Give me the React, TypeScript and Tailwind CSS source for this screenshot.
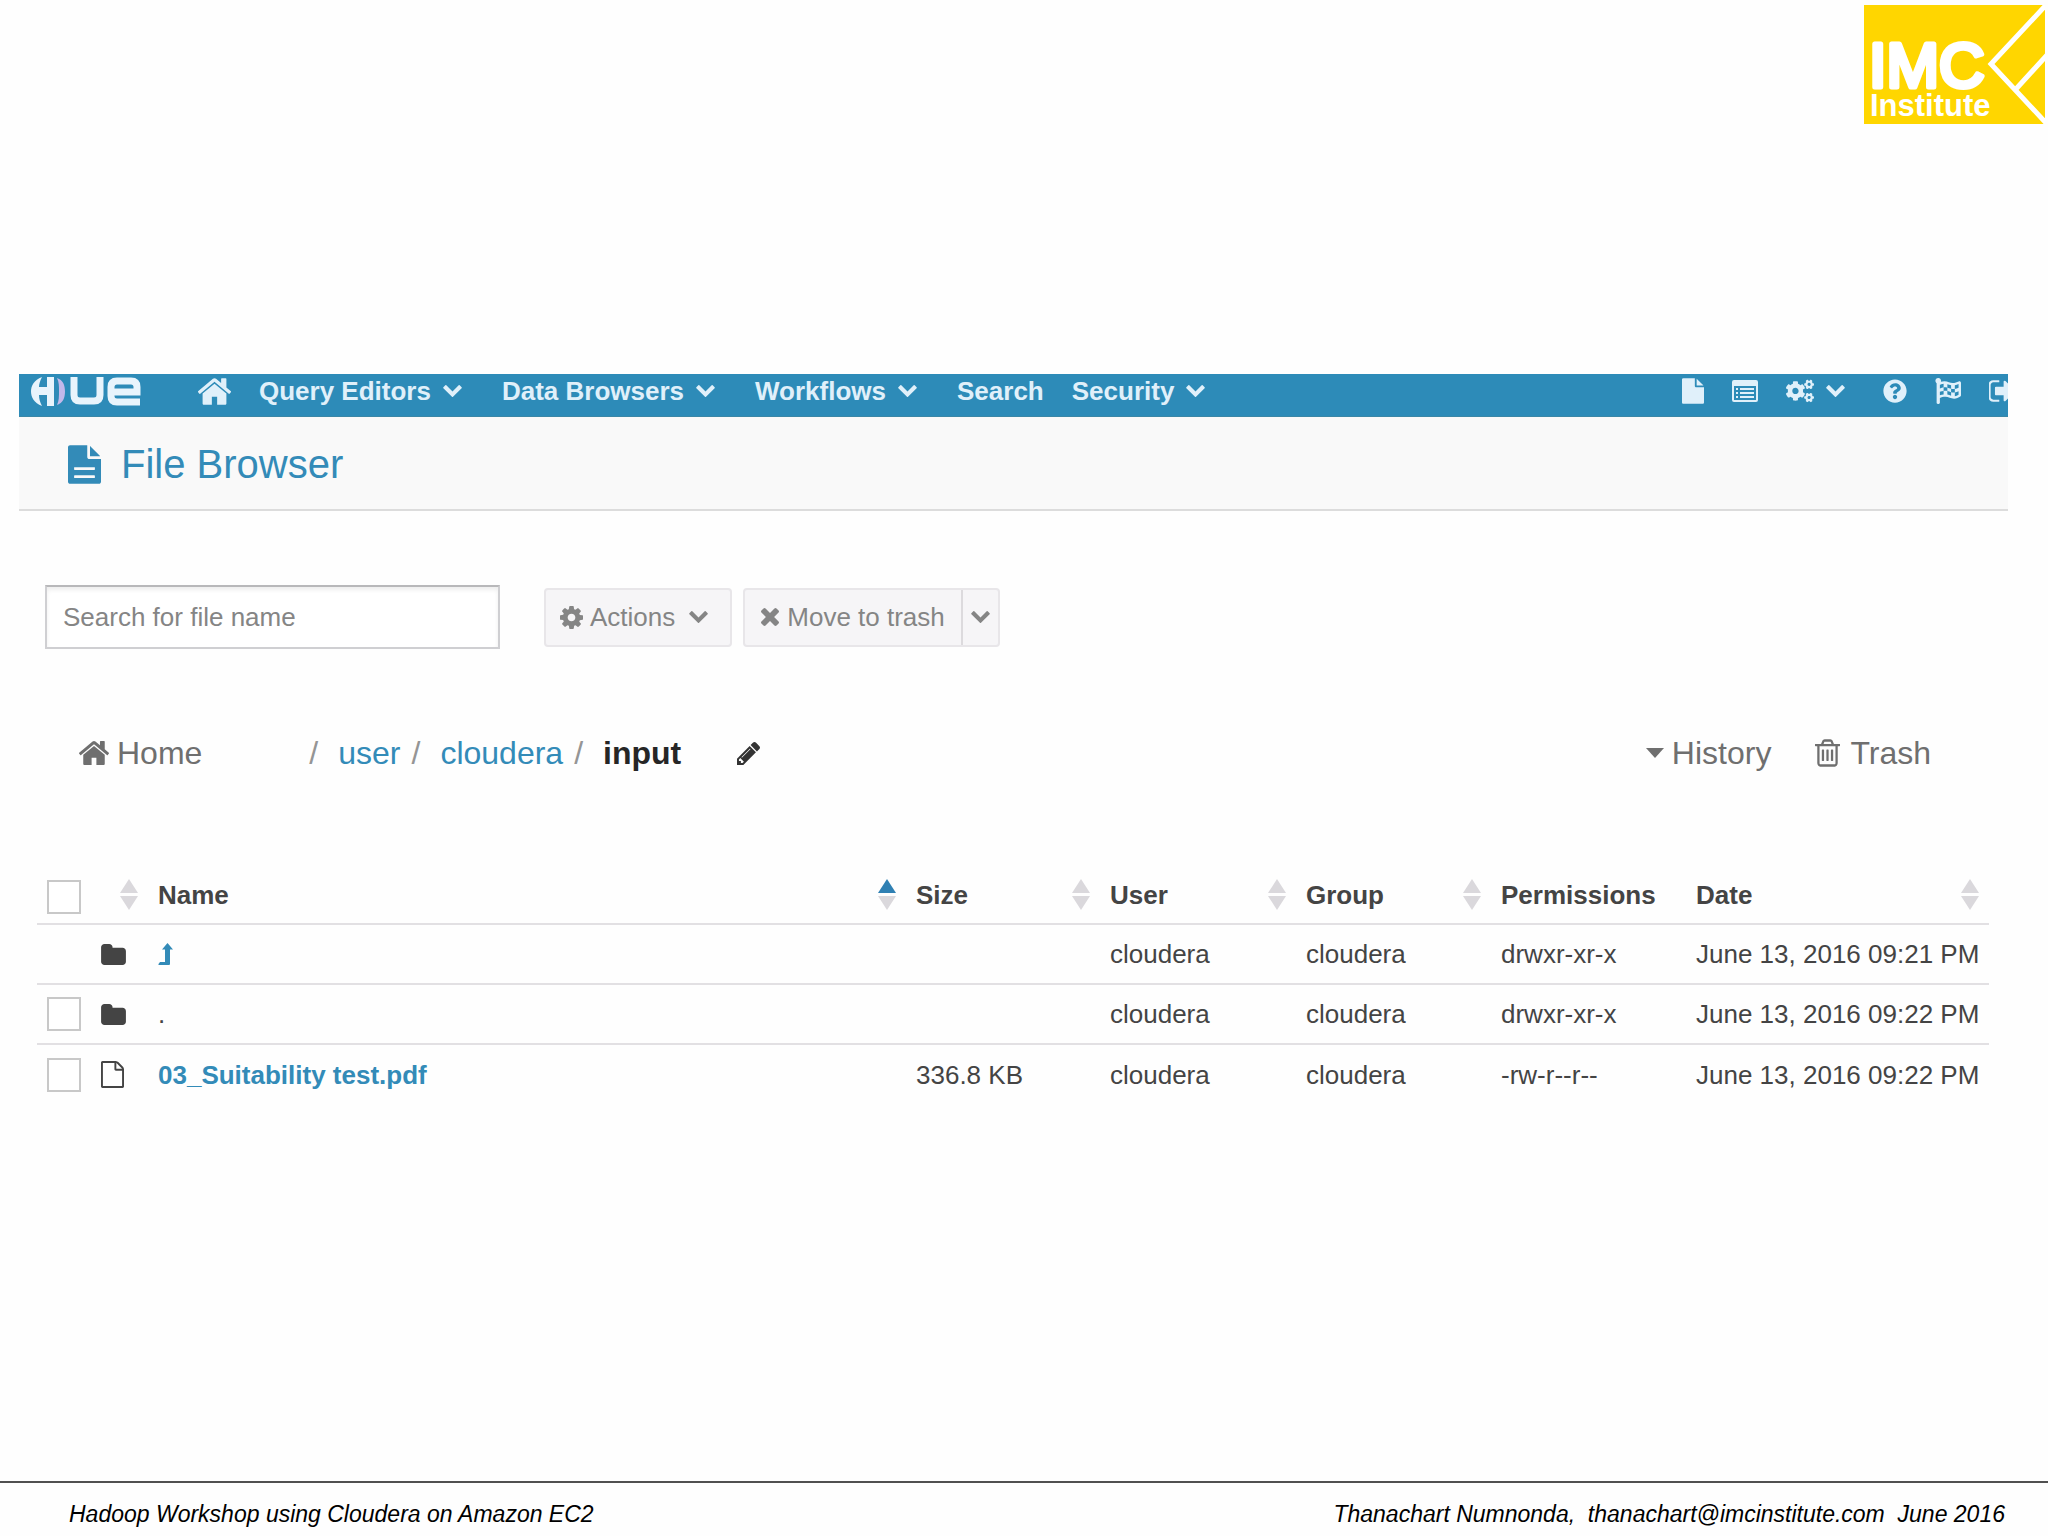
import { FaCogs, FaFlagCheckered, FaQuestionCircle } from "react-icons/fa";

const icons = {
  home: {
    viewBox: "97 250 1598 1286",
    d: "M1472 992v480q0 26-19 45t-45 19h-384v-384h-256v384h-384q-26 0-45-19t-19-45v-480q0-1 .5-3t.5-3l575-474 575 474q1 2 1 6zm223-69l-62 74q-8 9-21 11h-3q-13 0-21-7l-692-577-692 577q-12 8-24 7-13-2-21-11l-62-74q-8-10-7-23.5t11-21.5l719-599q32-26 76-26t76 26l244 204v-195q0-14 9-23t23-9h192q14 0 23 9t9 23v408l219 182q10 8 11 21.5t-7 23.5z",
  },
  chevron: {
    viewBox: "90 533 1612 1035",
    d: "M1683 808l-742 741q-19 19-45 19t-45-19l-742-741q-19-19-19-45.5t19-45.5l166-165q19-19 45-19t45 19l531 531 531-531q19-19 45-19t45 19l166 165q19 19 19 45.5t-19 45.5z",
  },
  file: {
    viewBox: "128 0 1536 1792",
    d: "M1152 512v-472q22 14 36 28l408 408q14 14 28 36h-472zm-128 32q0 40 28 68t68 28h544v1056q0 40-28 68t-68 28h-1344q-40 0-68-28t-28-68v-1600q0-40 28-68t68-28h800v544z",
  },
  fileText: {
    viewBox: "128 0 1536 1792",
    d: "M1596 476q14 14 28 36h-472v-472q22 14 36 28zm-476 164h544v1056q0 40-28 68t-68 28h-1344q-40 0-68-28t-28-68v-1600q0-40 28-68t68-28h800v544q0 40 28 68t68 28zm260 856v-64q0-14-9-23t-23-9h-904q-14 0-23 9t-9 23v64q0 14 9 23t23 9h904q14 0 23-9t9-23zm0-380v-64q0-14-9-23t-23-9h-904q-14 0-23 9t-9 23v64q0 14 9 23t23 9h904q14 0 23-9t9-23z",
  },
  fileOutline: {
    viewBox: "128 0 1536 1792",
    d: "M1596 380q28 28 48 76t20 88v1152q0 40-28 68t-68 28h-1344q-40 0-68-28t-28-68v-1600q0-40 28-68t68-28h896q40 0 88 20t76 48zm-444-244v376h376q-10-29-22-41l-313-313q-12-12-41-22zm384 1528v-1024h-416q-40 0-68-28t-28-68v-416h-768v1536h1280z",
  },
  listAlt: {
    viewBox: "0 0 26 22",
    d: "M2 0h22a2 2 0 0 1 2 2v18a2 2 0 0 1-2 2H2a2 2 0 0 1-2-2V2a2 2 0 0 1 2-2zM2 6v14h22V6zM4 8h2v2H4zM8 8h14v2H8zM4 12h2v2H4zM8 12h14v2H8zM4 16h2v2H4zM8 16h14v2H8z",
  },
  folder: {
    viewBox: "64 128 1664 1408",
    d: "M1728 608v704q0 92-66 158t-158 66h-1216q-92 0-158-66t-66-158v-960q0-92 66-158t158-66h320q92 0 158 66t66 158v32h672q92 0 158 66t66 158z",
  },
  levelUp: {
    viewBox: "0 0 15 22",
    d: "M9.500 0L15 6.500h-3V21q0 1-1 1H1q-1 0-.5-1L2 19h5V6.500H4z",
  },
  pencil: {
    viewBox: "128 149 1515 1515",
    d: "M491 1536l91-91-235-235-91 91v107h128v128h107zm523-928q0-22-22-22-10 0-17 7l-542 542q-7 7-7 17 0 22 22 22 10 0 17-7l542-542q7-7 7-17zm-54-192l416 416-832 832h-416v-416zm683 96q0 53-37 90l-166 166-416-416 166-165q36-38 90-38 53 0 91 38l235 234q37 39 37 91z",
  },
  times: {
    viewBox: "302 366 1188 1188",
    d: "M1490 1322q0 40-28 68l-136 136q-28 28-68 28t-68-28l-294-294-294 294q-28 28-68 28t-68-28l-136-136q-28-28-28-68t28-68l294-294-294-294q-28-28-28-68t28-68l136-136q28-28 68-28t68 28l294 294 294-294q28-28 68-28t68 28l136 136q28 28 28 68t-28 68l-294 294 294 294q28 28 28 68z",
  },
  cog: {
    viewBox: "128 128 1536 1536",
    d: "M1152 896q0-106-75-181t-181-75-181 75-75 181 75 181 181 75 181-75 75-181zm512-109v222q0 12-8 23t-20 13l-185 28q-19 54-39 91 35 50 107 138 10 12 10 25t-9 23q-27 37-99 108t-94 71q-12 0-26-9l-138-108q-44 23-91 38-16 136-29 186-7 28-36 28h-222q-14 0-24.5-8.5t-11.5-21.5l-28-184q-49-16-90-37l-141 107q-10 9-25 9-14 0-25-11-126-114-165-168-7-10-7-23 0-12 8-23 15-21 51-66.5t54-70.5q-27-50-41-99l-183-27q-13-2-21-12.5t-8-23.5v-222q0-12 8-23t19-13l186-28q14-46 39-92-40-57-107-138-10-12-10-24 0-10 9-23 26-36 98.5-107.5t94.5-71.5q13 0 26 10l138 107q44-23 91-38 16-136 29-186 7-28 36-28h222q14 0 24.5 8.5t11.5 21.5l28 184q49 16 90 37l142-107q9-9 24-9 13 0 25 10 129 119 165 170 7 8 7 22 0 12-8 23-15 21-51 66.5t-54 70.5q26 50 41 98l183 28q13 2 21 12.5t8 23.5z",
  },
  trash: {
    viewBox: "192 128 1408 1536",
    d: "M704 736v576q0 14-9 23t-23 9h-64q-14 0-23-9t-9-23v-576q0-14 9-23t23-9h64q14 0 23 9t9 23zm256 0v576q0 14-9 23t-23 9h-64q-14 0-23-9t-9-23v-576q0-14 9-23t23-9h64q14 0 23 9t9 23zm256 0v576q0 14-9 23t-23 9h-64q-14 0-23-9t-9-23v-576q0-14 9-23t23-9h64q14 0 23 9t9 23zm128 724v-948h-896v948q0 22 7 40.5t14.5 27 10.5 8.5h832q3 0 10.5-8.5t14.5-27 7-40.5zm-672-1076h448l-48-117q-7-9-17-11h-317q-10 2-17 11zm928 32v64q0 14-9 23t-23 9h-96v948q0 83-47 143.5t-113 60.5h-832q-66 0-113-58.5t-47-141.5v-952h-96q-14 0-23-9t-9-23v-64q0-14 9-23t23-9h309l70-167q15-37 54-63t79-26h320q40 0 79 26t54 63l70 167h309q14 0 23 9t9 23z",
  },
  caret: {
    viewBox: "0 0 18 10",
    d: "M0 0h18l-9 10z",
  },
  signOut: {
    viewBox: "96 256 1536 1280",
    d: "M704 1440q0 4 1 20t.5 26.5-3 23.5-10 19.5-20.5 6.5h-320q-119 0-203.5-84.5t-84.5-203.5v-704q0-119 84.5-203.5t203.5-84.5h320q13 0 22.5 9.5t9.5 22.5q0 4 1 20t.5 26.5-3 23.5-10 19.5-20.5 6.5h-320q-66 0-113 47t-47 113v704q0 66 47 113t113 47h312l11.5 1 11.5 3 8 5.5 7 9 2 13.5zm928-544q0 26-19 45l-544 544q-19 19-45 19t-45-19-19-45v-288h-448q-26 0-45-19t-19-45v-384q0-26 19-45t45-19h448v-288q0-26 19-45t45-19 45 19l544 544q19 19 19 45z",
  },
};

type IconProps = {
  name: keyof typeof icons;
  className: string;
};

function Icon({ name, className }: IconProps) {
  return (
    <svg
      aria-hidden="true"
      className={`shrink-0 ${className}`}
      fill="currentColor"
      fillRule={name === "listAlt" ? "evenodd" : "nonzero"}
      viewBox={icons[name].viewBox}
    >
      <path d={icons[name].d} />
    </svg>
  );
}

function ImcLogo() {
  return (
    <svg
      aria-label="IMC Institute"
      className="h-[119px] w-[181px]"
      role="img"
      viewBox="0 0 181 119"
    >
      <rect fill="#ffd600" height="119" width="181" />
      <g
        fill="#fff"
        fontFamily="'Liberation Sans', Arial, sans-serif"
        stroke="#fff"
        strokeLinejoin="round"
      >
        <text fontSize="63" strokeWidth="5" x="5" y="82">
          IMC
        </text>
        <text fontSize="31" fontWeight="700" strokeWidth="0" x="6" y="111">
          Institute
        </text>
      </g>
      <path
        d="M183-1L127 59l56 60M152 84l31-34"
        fill="none"
        stroke="#fff"
        strokeWidth="5"
      />
    </svg>
  );
}

function HueLogo() {
  return (
    <svg
      aria-label="Hue"
      className="h-[30px] w-[110px]"
      fill="none"
      role="img"
      viewBox="0 0 110 30"
    >
      <path
        d="M11 1C3 4 0 10 0 15.500S3 27 11 30C9 26 8 23 8 19h8v11h7V1h-7v10H8C8 8 9 5 11 1z"
        fill="#e8f4fc"
      />
      <path
        d="M26 2c2 4 2 8 2 13s0 10-2 14c6-2 8-7 8-13.500S32 4 26 2z"
        fill="#c3b8ea"
      />
      <g stroke="#e8f4fc" strokeWidth="7">
        <path d="M43 1v18q0 6 6 6h14q6 0 6-6V1" />
        <path d="M109 26H86q-6 0-6-6v-9q0-6 6-6h14q6 0 6 6v5H80" />
      </g>
    </svg>
  );
}

const menus = ["Query Editors", "Data Browsers", "Workflows"];

function NavBar() {
  return (
    <nav className="flex h-[43px] items-center overflow-hidden border-b border-[#3b87a6] bg-[#2d8bb8] pb-2 pl-3 text-[26px] font-bold leading-8 text-[#e0f0fa]">
      <a className="shrink-0" href="#hue">
        <HueLogo />
      </a>
      <a aria-label="Home" className="ml-[57px] shrink-0" href="#home">
        <Icon className="h-[27px] w-[33px]" name="home" />
      </a>
      <div className="ml-7 flex shrink-0 items-center gap-10">
        {menus.map((menu) => (
          <button className="flex items-center gap-3" key={menu} type="button">
            {menu}
            <Icon className="h-3 w-[19px]" name="chevron" />
          </button>
        ))}
        <div className="flex items-center gap-7">
          <a href="#search">Search</a>
          <button className="flex items-center gap-3" type="button">
            Security
            <Icon className="h-3 w-[19px]" name="chevron" />
          </button>
        </div>
      </div>
      <div className="-mr-[7px] ml-auto flex shrink-0 items-center gap-7">
        <a aria-label="File browser" href="#files">
          <Icon className="h-[26px] w-[22px]" name="file" />
        </a>
        <a aria-label="Job browser" href="#jobs">
          <Icon className="h-[22px] w-[26px]" name="listAlt" />
        </a>
        <button
          aria-label="Administration"
          className="mr-2.5 flex items-center gap-3"
          type="button"
        >
          <FaCogs className="size-7" />
          <Icon className="h-3 w-[19px]" name="chevron" />
        </button>
        <a aria-label="Help" href="#help">
          <FaQuestionCircle className="size-6" />
        </a>
        <a aria-label="Tour" href="#tour">
          <FaFlagCheckered className="size-[26px]" />
        </a>
        <a aria-label="Sign out" href="#logout">
          <Icon className="h-[22px] w-[26px]" name="signOut" />
        </a>
      </div>
    </nav>
  );
}

function Toolbar() {
  return (
    <div className="mt-[74px] flex items-center pl-[26px] text-[26px] leading-8 text-[#858585]">
      <input
        aria-label="Search for file name"
        className="h-16 w-[455px] border-2 border-[#cfcfd2] border-t-[#b8b8ba] bg-white px-4 shadow-[inset_0_3px_4px_rgba(0,0,0,0.07)] outline-none placeholder:text-[#858585]"
        placeholder="Search for file name"
        type="text"
      />
      <button
        className="ml-11 flex h-[59px] items-center rounded-sm border-2 border-[#e8e6e9] bg-[#f6f5f7] pl-3.5 pr-[22px]"
        type="button"
      >
        <Icon className="mr-[7px] size-[23px]" name="cog" />
        Actions
        <Icon className="ml-3.5 h-3 w-[19px]" name="chevron" />
      </button>
      <div className="ml-[11px] flex h-[59px] rounded-sm border-2 border-[#e8e6e9] bg-[#f6f5f7]">
        <button className="flex items-center pl-4 pr-4" type="button">
          <Icon className="mr-2 size-[18px]" name="times" />
          Move to trash
        </button>
        <button
          aria-label="More delete options"
          className="flex items-center border-l-2 border-[#dcdadd] px-2"
          type="button"
        >
          <Icon className="h-3 w-[19px]" name="chevron" />
        </button>
      </div>
    </div>
  );
}

const crumbs = ["user", "cloudera"];

function Breadcrumbs() {
  return (
    <div className="mt-[84px] flex h-10 items-center justify-between pl-[60px] pr-[77px] text-[32px] leading-10 text-[#6f6f6f]">
      <div className="flex items-center">
        <a className="mr-[107px] flex items-center gap-2" href="#home">
          <Icon className="h-6 w-[30px]" name="home" />
          Home
        </a>
        <ol className="flex items-center gap-[11px]">
          {crumbs.map((crumb) => (
            <li className="flex gap-5" key={crumb}>
              <span className="text-[#959595]">/</span>
              <a className="text-[#338bb8]" href={`#${crumb}`}>
                {crumb}
              </a>
            </li>
          ))}
          <li className="flex gap-5">
            <span className="text-[#959595]">/</span>
            <span className="font-bold text-[#262626]">input</span>
          </li>
        </ol>
        <button aria-label="Edit path" className="ml-14 text-[#333]" type="button">
          <Icon className="size-[23px]" name="pencil" />
        </button>
      </div>
      <div className="flex items-center gap-11">
        <button className="flex items-center gap-2" type="button">
          <Icon className="h-2.5 w-[18px]" name="caret" />
          History
        </button>
        <a className="flex items-center gap-2.5" href="#trash">
          <Icon className="h-7 w-[25px]" name="trash" />
          Trash
        </a>
      </div>
    </div>
  );
}

function SortArrows({ active = false }: { active?: boolean }) {
  return (
    <svg aria-hidden="true" className="h-[31px] w-[18px] shrink-0" viewBox="0 0 18 31">
      <path d="M9 0l9 14H0z" fill={active ? "#2f80b3" : "#dad8dc"} />
      <path d="M9 31l9-14H0z" fill="#dad8dc" />
    </svg>
  );
}

const columns = [
  { label: "Name", width: "", sortable: true, active: true },
  { label: "Size", width: "w-[194px]", sortable: true },
  { label: "User", width: "w-[196px]", sortable: true },
  { label: "Group", width: "w-[195px]", sortable: true },
  { label: "Permissions", width: "w-[195px]", sortable: false },
  { label: "Date", width: "w-[303px]", sortable: true },
];

const files = [
  {
    name: "up",
    icon: "folder" as const,
    size: "",
    permissions: "drwxr-xr-x",
    date: "June 13, 2016 09:21 PM",
  },
  {
    name: ".",
    icon: "folder" as const,
    size: "",
    permissions: "drwxr-xr-x",
    date: "June 13, 2016 09:22 PM",
  },
  {
    name: "03_Suitability test.pdf",
    icon: "fileOutline" as const,
    size: "336.8 KB",
    permissions: "-rw-r--r--",
    date: "June 13, 2016 09:22 PM",
  },
];

function Checkbox({ label }: { label: string }) {
  return (
    <input
      aria-label={label}
      className="block size-[34px] appearance-none border-2 border-[#c8c8c8] bg-white"
      type="checkbox"
    />
  );
}

function FileName({ name }: { name: string }) {
  if (name === "up") {
    return (
      <a aria-label="Parent folder" className="block text-[#338bb8]" href="#up">
        <Icon className="h-[22px] w-[15px]" name="levelUp" />
      </a>
    );
  }
  if (name === ".") {
    return <a href="#current">.</a>;
  }
  return (
    <a className="font-bold text-[#338bb8]" href="#file">
      {name}
    </a>
  );
}

function FileTable() {
  return (
    <div className="mt-[91px] pl-[18px] pr-[19px]">
      <table className="w-full table-fixed border-collapse text-left text-[26px] leading-8 text-[#444]">
        <thead>
          <tr className="h-[60px] border-b-2 border-[#e2e0e3]">
            <th className="w-[54px] pl-2.5 pt-1.5">
              <Checkbox label="Select all" />
            </th>
            <th className="w-[57px] pr-2.5 pt-0.5">
              <button aria-label="Sort by type" className="ml-auto block" type="button">
                <SortArrows />
              </button>
            </th>
            {columns.map((column) => (
              <th className={`px-2.5 pt-0.5 ${column.width}`} key={column.label}>
                <button
                  className="flex w-full items-center justify-between"
                  type="button"
                >
                  {column.label}
                  {column.sortable ? <SortArrows active={column.active} /> : null}
                </button>
              </th>
            ))}
          </tr>
        </thead>
        <tbody>
          {files.map((file) => (
            <tr
              className="h-[60px] whitespace-nowrap border-b-2 border-[#e2e0e3] last:border-b-0"
              key={file.name}
            >
              <td className="pl-2.5">
                {file.name === "up" ? null : <Checkbox label={`Select ${file.name}`} />}
              </td>
              <td className="pl-2.5">
                <Icon
                  className={
                    file.icon === "folder" ? "h-[21px] w-[25px]" : "h-[27px] w-[23px]"
                  }
                  name={file.icon}
                />
              </td>
              <td className="px-2.5">
                <FileName name={file.name} />
              </td>
              <td className="px-2.5">{file.size}</td>
              <td className="px-2.5">cloudera</td>
              <td className="px-2.5">cloudera</td>
              <td className="px-2.5">{file.permissions}</td>
              <td className="pl-2.5">{file.date}</td>
            </tr>
          ))}
        </tbody>
      </table>
    </div>
  );
}

export default function App() {
  return (
    <div className="flex min-h-screen flex-col bg-[#fefefe] font-['Liberation_Sans',Arial,sans-serif]">
      <header className="flex justify-end pr-[3px] pt-[5px]">
        <ImcLogo />
      </header>
      <main className="ml-[19px] mr-10 mt-[250px]">
        <NavBar />
        <div className="flex h-[94px] items-center gap-5 border-b-2 border-[#dcdcdc] bg-[#f9f9f9] pl-[49px] pt-0.5 text-[#338bb8]">
          <Icon className="h-[39px] w-[33px]" name="fileText" />
          <h1 className="text-[40px] leading-[48px]">File Browser</h1>
        </div>
        <Toolbar />
        <Breadcrumbs />
        <FileTable />
      </main>
      <footer className="mt-auto flex h-[55px] items-center justify-between border-t-2 border-[#505050] pl-[69px] pr-[43px] pt-2 text-[23px] italic leading-7 text-black">
        <p>Hadoop Workshop using Cloudera on Amazon EC2</p>
        <p className="whitespace-pre">
          {"Thanachart Numnonda,  thanachart@imcinstitute.com  June 2016"}
        </p>
      </footer>
    </div>
  );
}
